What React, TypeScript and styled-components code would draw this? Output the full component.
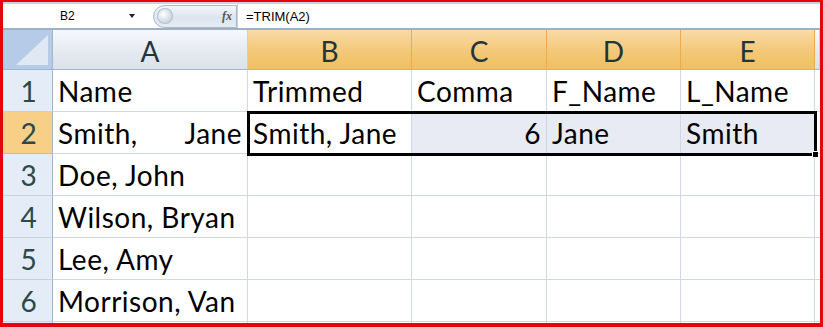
import React from "react";
import styled, { createGlobalStyle } from "styled-components";

const Global = createGlobalStyle`
  html, body { margin: 0; padding: 0; background: #fff; }
  body { font-family: "Lato", "Liberation Sans", sans-serif; }
`;

const Frame = styled.div`
  width: 823px;
  height: 327px;
  box-sizing: border-box;
  border-style: solid;
  border-color: #e5050d;
  border-width: 2px 3px 4px 3px;
  overflow: hidden;
  display: flex;
  flex-direction: column;
  background: #fff;
`;

const FormulaBar = styled.div`
  height: 24px;
  flex: none;
  display: flex;
  align-items: center;
  border-top: 2px solid #c9d3e0;
  border-bottom: 2px solid #9fb1c6;
  background: #fff;
  font-family: "Liberation Sans", Arial, sans-serif;
  font-size: 12px;
  color: #000;
`;

const NameBox = styled.div`
  width: 138px;
  box-sizing: border-box;
  padding-left: 57px;
  display: flex;
  align-items: center;
  justify-content: space-between;
  padding-right: 6px;
`;

const Arrow = styled.span`
  width: 0;
  height: 0;
  border-left: 3px solid transparent;
  border-right: 3px solid transparent;
  border-top: 4px solid #222;
`;

const Pill = styled.div`
  width: 84px;
  height: 23px;
  margin-left: 12px;
  box-sizing: border-box;
  border: 1px solid #a9b7c9;
  border-radius: 12px 0 0 12px;
  background: linear-gradient(#f3f6fa, #dce4ee 55%, #e6ecf3);
  display: flex;
  align-items: center;
  justify-content: space-between;
  padding: 0 4px 0 3px;
`;

const Knob = styled.span`
  width: 16px;
  height: 16px;
  border-radius: 50%;
  background: radial-gradient(circle at 40% 40%, #ffffff, #c7d1dd 70%, #b5c1cf);
  box-shadow: inset 0 0 0 1px #b8c4d2;
`;

const Fx = styled.span`
  font-family: "Liberation Serif", "Times New Roman", serif;
  font-style: italic;
  font-weight: bold;
  font-size: 12px;
  color: #555;
`;

const FormulaText = styled.div`
  flex: 1;
  height: 100%;
  display: flex;
  align-items: center;
  padding-left: 8px;
  font-size: 13px;
  border-left: 1px solid #c7d1dd;
`;

const SheetWrap = styled.div`
  position: relative;
  flex: 1;
`;

const Sheet = styled.div`
  display: grid;
  grid-template-columns: 50px 195px 164px 135px 134px 134px 5px;
  grid-template-rows: 40px repeat(6, 42px) 10px;
`;

const Corner = styled.div`
  box-sizing: border-box;
  border-right: 1px solid #9eb6ce;
  border-bottom: 1px solid #9eb6ce;
  background: #b5cbe7;
  position: relative;
  &::after {
    content: "";
    position: absolute;
    right: 4px;
    bottom: 4px;
    width: 0;
    height: 0;
    border-left: 32px solid transparent;
    border-bottom: 30px solid #dfe8f3;
  }
`;

const ColHead = styled.div<{ $sel?: boolean }>`
  box-sizing: border-box;
  display: flex;
  align-items: center;
  justify-content: center;
  font-family: "Lato", "Liberation Sans", sans-serif;
  font-size: 28px;
  color: #22363a;
  padding-top: 2px;
  background: ${(p) =>
    p.$sel
      ? "linear-gradient(#f9dba6, #f3c878 55%, #f0bf60)"
      : "linear-gradient(#f6f8fb, #e4e9f0 60%, #dbe2eb)"};
  border-right: 1px solid ${(p) => (p.$sel ? "#f0a94d" : "#c5d1de")};
  border-bottom: 1px solid ${(p) => (p.$sel ? "#f2a84c" : "#9eb6ce")};
`;

const RowHead = styled.div<{ $sel?: boolean }>`
  box-sizing: border-box;
  display: flex;
  align-items: center;
  justify-content: center;
  font-family: "Lato", "Liberation Sans", sans-serif;
  font-size: 28px;
  color: #2c4848;
  padding-left: 2px;
  background: ${(p) => (p.$sel ? "#f8cf86" : "#e4ecf7")};
  border-right: 1px solid #9eb6ce;
  border-bottom: 1px solid ${(p) => (p.$sel ? "#f2b15a" : "#c5d2e2")};
`;

const Cell = styled.div<{ $num?: boolean; $hl?: boolean }>`
  box-sizing: border-box;
  display: flex;
  align-items: center;
  justify-content: ${(p) => (p.$num ? "flex-end" : "flex-start")};
  padding: 0 5px 0 5px;
  font-family: "Lato", "Liberation Sans", sans-serif;
  font-size: 28px;
  letter-spacing: 0.5px;
  color: #000;
  white-space: pre;
  overflow: visible;
  background: ${(p) => (p.$hl ? "#e8eaf4" : "#fff")};
  border-right: 1px solid #d0d7e5;
  border-bottom: 1px solid #d0d7e5;
`;

const Selection = styled.div`
  position: absolute;
  left: 244px;
  top: 81px;
  width: 570px;
  height: 45px;
  box-sizing: border-box;
  border: 3px solid #000;
  pointer-events: none;
  &::after {
    content: "";
    position: absolute;
    right: -5px;
    bottom: -5px;
    width: 5px;
    height: 5px;
    background: #000;
    border: 1px solid #fff;
  }
`;

const SpreadText = styled.span`
  display: flex;
  justify-content: space-between;
  width: 100%;
  margin-right: -4px;
`;

const cols = ["A", "B", "C", "D", "E"];

const rows: { cells: string[] }[] = [
  { cells: ["Name", "Trimmed", "Comma", "F_Name", "L_Name"] },
  { cells: ["Smith,      Jane", "Smith, Jane", "6", "Jane", "Smith"] },
  { cells: ["Doe, John", "", "", "", ""] },
  { cells: ["Wilson, Bryan", "", "", "", ""] },
  { cells: ["Lee, Amy", "", "", "", ""] },
  { cells: ["Morrison, Van", "", "", "", ""] },
];

export default function App() {
  return (
    <>
      <Global />
      <Frame>
        <FormulaBar>
          <NameBox>
            <span>B2</span>
            <Arrow />
          </NameBox>
          <Pill>
            <Knob />
            <Fx>fx</Fx>
          </Pill>
          <FormulaText>=TRIM(A2)</FormulaText>
        </FormulaBar>
        <SheetWrap>
          <Sheet>
            <Corner />
            {cols.map((c) => (
              <ColHead key={c} $sel={c !== "A"}>
                {c}
              </ColHead>
            ))}
            <ColHead />
            {rows.map((r, i) => (
              <React.Fragment key={i}>
                <RowHead $sel={i === 1}>{i + 1}</RowHead>
                {r.cells.map((v, j) => (
                  <Cell
                    key={j}
                    $num={i === 1 && j === 2}
                    $hl={i === 1 && j >= 2}
                  >
                    {i === 1 && j === 0 ? (
                      <SpreadText>
                        <span>Smith,</span>
                        <span>Jane</span>
                      </SpreadText>
                    ) : (
                      v
                    )}
                  </Cell>
                ))}
                <Cell />
              </React.Fragment>
            ))}
            <RowHead />
            {cols.map((c) => (
              <Cell key={c} />
            ))}
            <Cell />
          </Sheet>
          <Selection />
        </SheetWrap>
      </Frame>
    </>
  );
}
